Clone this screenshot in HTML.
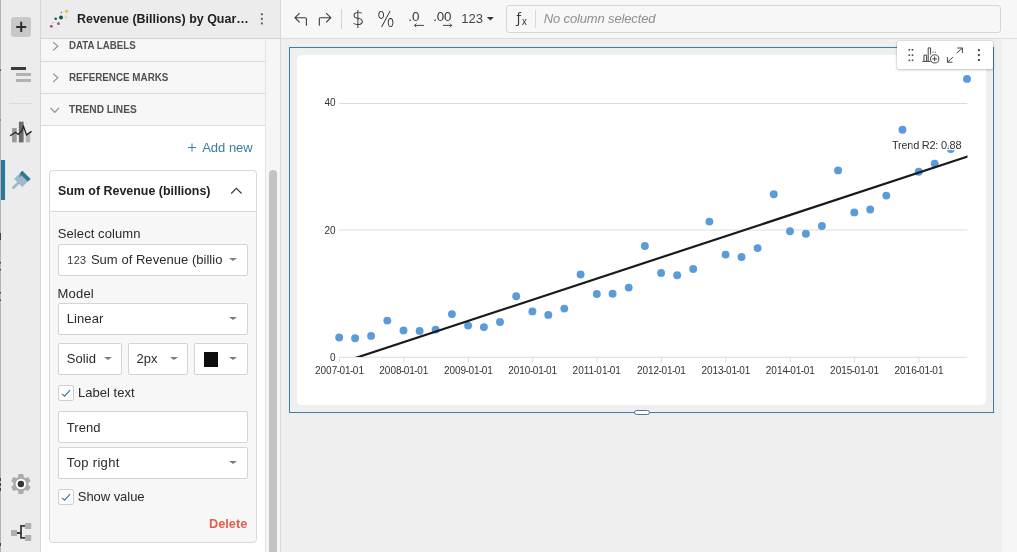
<!DOCTYPE html>
<html lang="en">
<head>
<meta charset="utf-8">
<title>Revenue (Billions) by Quarter</title>
<style>
*{box-sizing:border-box;margin:0;padding:0}
html,body{width:1017px;height:552px;overflow:hidden;background:#efefef;font-family:"Liberation Sans",sans-serif;color:#222}
.abs{position:absolute}
#app{position:relative;width:1017px;height:552px;overflow:hidden;will-change:transform}
/* left rail */
#rail{left:0;top:0;width:41px;height:552px;background:#ececec;border-right:1px solid #d6d6d6}
#edge{left:0;top:0;width:1px;height:552px;background:#b4b4b4}
#plus{left:11px;top:17px;width:20px;height:20px;background:#c8c8c8;border-radius:3px}
#active{left:1px;top:160px;width:4px;height:40px;background:#2d7797;box-shadow:1px 0 0 #c9edf7}
/* side panel */
#panel{left:41px;top:0;width:240px;height:552px;background:#fff;border-right:1px solid #d9d9d9}
#phead{left:0;top:0;width:239px;height:39px;background:#ececec;border-bottom:1px solid #d4d4d4}
.sec{left:0;width:225px;height:32px;background:#f7f7f7;border-bottom:1px solid #dadada;border-right:1px solid #e4e4e4}
#track{left:224px;top:39px;width:15px;height:513px;background:#f6f6f6;border-left:1px solid #e3e3e3}
#thumb{left:228.2px;top:170px;width:7.6px;height:400px;background:#c3c3c3;border-radius:4px}
#card{left:8px;top:170px;width:208px;height:373px;background:#f7f7f7;border:1px solid #d9d9d9;border-radius:4px}
#cardh{left:8px;top:170px;width:208px;height:42px;background:#fff;border:1px solid #d9d9d9;border-radius:4px 4px 0 0}
.inp{position:absolute;background:#fff;border:1px solid #d4d4d4;border-radius:2px;height:32px}
.caret{position:absolute;width:0;height:0;border-left:4.3px solid transparent;border-right:4.3px solid transparent;border-top:3.9px solid #7c7c7c;margin-left:-.6px;margin-top:-1px}
.chk{position:absolute;width:16px;height:16px;background:#fff;border:1px solid #cfcfcf;border-radius:2px}
.t{position:absolute;white-space:nowrap;display:block}
/* top toolbar */
#top{left:281px;top:0;width:736px;height:39px;background:#f7f7f7;border-bottom:1px solid #dcdcdc}
#fx{left:506px;top:5px;width:495px;height:28px;background:#f7f7f7;border:1px solid #d6d6d6;border-radius:3px}
#gutter{left:1002px;top:39px;width:15px;height:513px;background:#f6f6f6}
#sel{left:289px;top:47px;width:705px;height:366px;border:1px solid #4a7c95;box-shadow:0 0 0 1px #dcf3f9}
#ccard{left:297px;top:55px;width:689px;height:350px;background:#fff;border-radius:5px}
#tools{left:896.6px;top:40.6px;width:96.6px;height:28.4px;background:#fff;border-radius:2px;box-shadow:0 0 0 .6px rgba(0,0,0,.1),0 1px 3px rgba(0,0,0,.2)}
#handle{left:634px;top:410px;width:16px;height:5px;background:#fff;border:1px solid #4a7c95;border-radius:3px}
svg.chart,svg.ov{position:absolute;left:0;top:0}
.sym{position:absolute;white-space:nowrap;color:#3c3c3c;line-height:1}
</style>
</head>
<body>
<div id="app">
<div class="abs" id="top"></div>
<div class="abs" id="fx"></div>
<div class="abs" id="gutter"></div>
<div class="abs" id="sel"></div>
<div class="abs" id="ccard"></div>
<svg class="chart" width="1017" height="552" viewBox="0 0 1017 552">
<g stroke="#dcdcdc" stroke-width="1">
<line x1="339.0" x2="967.3" y1="103.5" y2="103.5"/><line x1="339.0" x2="967.3" y1="230" y2="230"/><line x1="339.0" x2="967.3" y1="357.3" y2="357.3"/>
<line x1="339.5" x2="339.5" y1="357.5" y2="362.5"/><line x1="403.8" x2="403.8" y1="357.5" y2="362.5"/><line x1="468.4" x2="468.4" y1="357.5" y2="362.5"/><line x1="532.7" x2="532.7" y1="357.5" y2="362.5"/><line x1="597.1" x2="597.1" y1="357.5" y2="362.5"/><line x1="661.4" x2="661.4" y1="357.5" y2="362.5"/><line x1="725.9" x2="725.9" y1="357.5" y2="362.5"/><line x1="790.3" x2="790.3" y1="357.5" y2="362.5"/><line x1="854.6" x2="854.6" y1="357.5" y2="362.5"/><line x1="919.0" x2="919.0" y1="357.5" y2="362.5"/></g>
<g font-family="Liberation Sans, sans-serif" font-size="10" fill="#333" text-anchor="end"><text x="335.6" y="106">40</text><text x="335.6" y="233.7">20</text><text x="335.6" y="360.6">0</text></g>
<g font-family="Liberation Sans, sans-serif" font-size="10" fill="#333"><text x="315.0" y="373.7">2007<tspan dx="-.55">-</tspan><tspan dx="-.55">01</tspan><tspan dx="-.55">-</tspan><tspan dx="-.55">01</tspan></text><text x="379.3" y="373.7">2008<tspan dx="-.55">-</tspan><tspan dx="-.55">01</tspan><tspan dx="-.55">-</tspan><tspan dx="-.55">01</tspan></text><text x="443.9" y="373.7">2009<tspan dx="-.55">-</tspan><tspan dx="-.55">01</tspan><tspan dx="-.55">-</tspan><tspan dx="-.55">01</tspan></text><text x="508.2" y="373.7">2010<tspan dx="-.55">-</tspan><tspan dx="-.55">01</tspan><tspan dx="-.55">-</tspan><tspan dx="-.55">01</tspan></text><text x="572.6" y="373.7">2011<tspan dx="-.55">-</tspan><tspan dx="-.55">01</tspan><tspan dx="-.55">-</tspan><tspan dx="-.55">01</tspan></text><text x="636.9" y="373.7">2012<tspan dx="-.55">-</tspan><tspan dx="-.55">01</tspan><tspan dx="-.55">-</tspan><tspan dx="-.55">01</tspan></text><text x="701.4" y="373.7">2013<tspan dx="-.55">-</tspan><tspan dx="-.55">01</tspan><tspan dx="-.55">-</tspan><tspan dx="-.55">01</tspan></text><text x="765.8" y="373.7">2014<tspan dx="-.55">-</tspan><tspan dx="-.55">01</tspan><tspan dx="-.55">-</tspan><tspan dx="-.55">01</tspan></text><text x="830.1" y="373.7">2015<tspan dx="-.55">-</tspan><tspan dx="-.55">01</tspan><tspan dx="-.55">-</tspan><tspan dx="-.55">01</tspan></text><text x="894.5" y="373.7">2016<tspan dx="-.55">-</tspan><tspan dx="-.55">01</tspan><tspan dx="-.55">-</tspan><tspan dx="-.55">01</tspan></text></g>
<g fill="#5b9bd9"><circle cx="339.2" cy="337.5" r="3.95"/><circle cx="355.1" cy="338.3" r="3.95"/><circle cx="371.1" cy="335.9" r="3.95"/><circle cx="387.3" cy="320.6" r="3.95"/><circle cx="403.5" cy="330.4" r="3.95"/><circle cx="419.6" cy="330.9" r="3.95"/><circle cx="435.6" cy="329.6" r="3.95"/><circle cx="451.9" cy="314.1" r="3.95"/><circle cx="468.1" cy="325.6" r="3.95"/><circle cx="483.9" cy="327.1" r="3.95"/><circle cx="500.0" cy="322.0" r="3.95"/><circle cx="516.2" cy="296.2" r="3.95"/><circle cx="532.4" cy="311.4" r="3.95"/><circle cx="548.3" cy="314.9" r="3.95"/><circle cx="564.3" cy="308.6" r="3.95"/><circle cx="580.6" cy="274.4" r="3.95"/><circle cx="596.8" cy="294.0" r="3.95"/><circle cx="612.6" cy="293.7" r="3.95"/><circle cx="628.7" cy="287.6" r="3.95"/><circle cx="644.9" cy="246.0" r="3.95"/><circle cx="661.1" cy="273.0" r="3.95"/><circle cx="677.2" cy="275.2" r="3.95"/><circle cx="693.2" cy="269.0" r="3.95"/><circle cx="709.4" cy="221.6" r="3.95"/><circle cx="725.6" cy="254.6" r="3.95"/><circle cx="741.5" cy="257.0" r="3.95"/><circle cx="757.6" cy="248.1" r="3.95"/><circle cx="773.8" cy="194.2" r="3.95"/><circle cx="790.0" cy="231.3" r="3.95"/><circle cx="805.9" cy="233.8" r="3.95"/><circle cx="821.9" cy="226.0" r="3.95"/><circle cx="838.1" cy="170.4" r="3.95"/><circle cx="854.3" cy="212.4" r="3.95"/><circle cx="870.2" cy="209.5" r="3.95"/><circle cx="886.3" cy="195.6" r="3.95"/><circle cx="902.5" cy="129.7" r="3.95"/><circle cx="918.7" cy="171.7" r="3.95"/><circle cx="934.7" cy="163.6" r="3.95"/><circle cx="950.8" cy="149.0" r="3.95"/><circle cx="967.0" cy="78.9" r="3.95"/></g>
<clipPath id="plotclip"><rect x="339.5" y="50" width="628.0" height="307.0"/></clipPath><g clip-path="url(#plotclip)"><line transform="translate(-0.3 0)" x1="347.8" y1="360.6" x2="973.3" y2="154.8" stroke="#1a1a1a" stroke-width="2.2"/></g>
<text x="892" y="149" textLength="69.6" lengthAdjust="spacing" font-family="Liberation Sans, sans-serif" font-size="11" fill="#303030" stroke="#fff" stroke-width="2.4" paint-order="stroke" stroke-linejoin="round">Trend R2: 0.88</text>
</svg>
<div class="abs" id="tools"></div>
<div class="abs" id="handle"></div>

<div class="abs" id="panel">
  <div class="abs sec" style="top:30px"></div>
  <div class="abs sec" style="top:62px"></div>
  <div class="abs sec" style="top:94px"></div>
  <div class="abs" id="card"></div>
  <div class="abs" id="cardh"></div>
  <div class="inp" style="left:17px;top:244px;width:190px"><i class="caret" style="left:171px;top:14px"></i></div>
  <div class="inp" style="left:17px;top:303px;width:190px"><i class="caret" style="left:171px;top:14px"></i></div>
  <div class="inp" style="left:17px;top:343px;width:64px"><i class="caret" style="left:45.5px;top:14px"></i></div>
  <div class="inp" style="left:87px;top:343px;width:60px"><i class="caret" style="left:41.5px;top:14px"></i></div>
  <div class="inp" style="left:153px;top:343px;width:54px"><div class="abs" style="left:9.3px;top:8px;width:14px;height:14.5px;background:#0d0d0d"></div><i class="caret" style="left:35px;top:14px"></i></div>
  <div class="chk" style="left:17px;top:385px"></div>
  <div class="inp" style="left:17px;top:411px;width:190px"></div>
  <div class="inp" style="left:17px;top:447px;width:190px"><i class="caret" style="left:171px;top:14px"></i></div>
  <div class="chk" style="left:17px;top:489px"></div>
  <div class="abs" id="track"></div>
  <div class="abs" id="thumb"></div>
  <div class="abs" id="phead"></div>
</div>
<div class="abs" id="rail">
  <div class="abs" id="edge"></div>
  <div class="abs" id="plus"></div>
  <div class="abs" id="active"></div>
</div>

<!-- toolbar glyph symbols (real text) -->
<span class="sym" id="g_dollar" style="left:351.8px;top:9.4px;font-size:19.8px;font-family:'DejaVu Sans',sans-serif;font-weight:200;color:#1e1e1e">$</span>
<span class="sym" id="g_pct" style="left:376.8px;top:10.3px;font-size:21px;font-family:'DejaVu Sans',sans-serif;font-weight:200;color:#1e1e1e;transform:scaleX(.89);transform-origin:0 0">%</span>
<span class="sym" id="g_d1" style="left:408.2px;top:9.9px;font-size:13.4px;color:#383838">.0</span>
<span class="sym" id="g_d2" style="left:433.2px;top:9.9px;font-size:13.4px;color:#383838;letter-spacing:-.15px">.00</span>
<span class="sym" id="g_f" style="left:516.4px;top:11.3px;font-size:14.5px;font-family:'DejaVu Sans Condensed','DejaVu Sans',sans-serif;color:#3a3a3a">ƒ</span>
<span class="sym" id="g_x" style="left:521.7px;top:17.3px;font-size:10px;font-family:'DejaVu Sans Condensed','DejaVu Sans',sans-serif;color:#3a3a3a">x</span>

<span class="t" id="t_title" style="left:76.60px;top:10.80px;height:15.2px;line-height:15.2px;font-size:13.2px;transform:scaleX(0.9448);transform-origin:0 0;font-weight:bold;color:#222">Revenue (Billions) by Quar…</span>
<span class="t" id="t_s1" style="left:68.80px;top:38.60px;height:13.4px;line-height:13.4px;font-size:11.4px;transform:scaleX(0.8511);transform-origin:0 0;font-weight:bold;color:#505050">DATA LABELS</span>
<span class="t" id="t_s2" style="left:68.80px;top:70.50px;height:13.4px;line-height:13.4px;font-size:11.4px;transform:scaleX(0.8629);transform-origin:0 0;font-weight:bold;color:#505050">REFERENCE MARKS</span>
<span class="t" id="t_s3" style="left:68.80px;top:102.50px;height:13.4px;line-height:13.4px;font-size:11.4px;transform:scaleX(0.8913);transform-origin:0 0;font-weight:bold;color:#505050">TREND LINES</span>
<span class="t" id="t_add" style="left:202.20px;top:140.10px;height:15px;line-height:15px;font-size:13px;letter-spacing:-0.013px;color:#3a7d9b">Add new</span>
<span class="t" id="t_sum" style="left:57.80px;top:183.10px;height:15px;line-height:15px;font-size:13px;transform:scaleX(0.9554);transform-origin:0 0;font-weight:bold;color:#222">Sum of Revenue (billions)</span>
<span class="t" id="t_selc" style="left:57.80px;top:225.80px;height:15px;line-height:15px;font-size:13px;letter-spacing:0.080px;color:#2a2a2a">Select column</span>
<span class="t" id="t_123a" style="left:67.30px;top:253.50px;height:12.8px;line-height:12.8px;font-size:10.8px;letter-spacing:0.328px;color:#3a3a3a">123</span>
<span class="t" id="t_sumb" style="left:90.90px;top:252.10px;height:15px;line-height:15px;font-size:13px;letter-spacing:0.037px;color:#2a2a2a">Sum of Revenue (billio</span>
<span class="t" id="t_model" style="left:57.60px;top:285.70px;height:15px;line-height:15px;font-size:13px;letter-spacing:0.176px;color:#2a2a2a">Model</span>
<span class="t" id="t_linear" style="left:66.70px;top:311.30px;height:15px;line-height:15px;font-size:13px;letter-spacing:0.093px;color:#2a2a2a">Linear</span>
<span class="t" id="t_solid" style="left:66.70px;top:351.30px;height:15px;line-height:15px;font-size:13px;letter-spacing:0.116px;color:#2a2a2a">Solid</span>
<span class="t" id="t_2px" style="left:136.50px;top:351.30px;height:15px;line-height:15px;font-size:13px;letter-spacing:-0.023px;color:#2a2a2a">2px</span>
<span class="t" id="t_label" style="left:77.90px;top:385.10px;height:15px;line-height:15px;font-size:13px;letter-spacing:0.032px;color:#2a2a2a">Label text</span>
<span class="t" id="t_trend" style="left:66.80px;top:419.80px;height:15px;line-height:15px;font-size:13px;letter-spacing:0.043px;color:#2a2a2a">Trend</span>
<span class="t" id="t_topr" style="left:66.80px;top:455.30px;height:15px;line-height:15px;font-size:13px;letter-spacing:0.336px;color:#2a2a2a">Top right</span>
<span class="t" id="t_showv" style="left:77.80px;top:489.10px;height:15px;line-height:15px;font-size:13px;letter-spacing:-0.052px;color:#2a2a2a">Show value</span>
<span class="t" id="t_del" style="left:209.40px;top:515.90px;height:15px;line-height:15px;font-size:13px;transform:scaleX(0.9813);transform-origin:0 0;font-weight:bold;color:#e0604f">Delete</span>
<span class="t" id="t_123b" style="left:461.20px;top:11.00px;height:15px;line-height:15px;font-size:13px;letter-spacing:0.099px;color:#444">123</span>
<span class="t" id="t_nocol" style="left:543.80px;top:11.10px;height:15px;line-height:15px;font-size:13px;letter-spacing:-0.148px;font-style:italic;color:#8e8e8e">No column selected</span>


<!-- icon overlay -->
<svg class="ov" width="1017" height="552" viewBox="0 0 1017 552" fill="none">
  <!-- rail: plus -->
  <path d="M16.2 27H26.2M21.2 21.8V32" stroke="#2e2e2e" stroke-width="2"/>
  <!-- rail: list icon -->
  <rect x="11" y="67" width="15" height="3" fill="#3a3a3a"/>
  <rect x="16" y="73" width="15" height="3" fill="#b2b2b2"/>
  <rect x="16" y="79" width="15" height="3" fill="#b2b2b2"/>
  <rect x="9" y="103" width="23" height="1" fill="#d9d9d9"/>
  <!-- rail: chart icon -->
  <rect x="12.1" y="128.1" width="4.6" height="14.3" fill="#9b9b9b"/>
  <rect x="18.9" y="121.7" width="4.7" height="20.7" fill="#6a6a6a"/>
  <rect x="25.7" y="134" width="4.5" height="8.4" fill="#b6b6b6"/>
  <path d="M10.2 135.7L15.5 132.2L18.3 134.4L21.6 131.2L23.5 126.3L26.5 134.9L31.6 131.4" stroke="#222" stroke-width="1.3" stroke-linejoin="miter"/>
  <!-- rail: brush -->
  <g transform="translate(22.3 178.9) rotate(45)">
    <rect x="-1.4" y="4" width="2.8" height="10" rx="1.4" fill="#9fb9ca"/>
    <rect x="-5.8" y="-5.8" width="11.6" height="11.6" fill="#9fb9ca"/>
    <rect x="-5.8" y="-5.8" width="11.6" height="3.8" fill="#2d7797"/>
    <path d="M-3.6 -2.6V0.4" stroke="#2d7797" stroke-width="1"/>
  </g>
  <!-- rail: gear -->
  <g transform="translate(20.9 484)">
    <circle r="7.6" fill="#ababab"/>
    <g fill="#ababab">
      <rect x="-2.7" y="-10" width="5.4" height="20" rx="1.3"/>
      <rect x="-2.7" y="-10" width="5.4" height="20" rx="1.3" transform="rotate(60)"/>
      <rect x="-2.7" y="-10" width="5.4" height="20" rx="1.3" transform="rotate(120)"/>
    </g>
    <circle r="5.2" fill="#fff"/>
    <circle r="3.2" fill="#333"/>
  </g>
  <!-- rail: tree -->
  <rect x="11" y="530" width="6" height="6" fill="#b0b0b0"/>
  <rect x="25" y="523" width="6.2" height="6" fill="#b0b0b0"/>
  <rect x="25" y="535" width="6.2" height="6" fill="#b0b0b0"/>
  <path d="M17 533H21M25 525.9H21V537.9H25" stroke="#3a3a3a" stroke-width="1.8"/>
  <!-- rail: clipped marks at x=0 -->
  <g fill="#444"><rect x="0" y="69.5" width="1" height="1.5"/><rect x="0" y="233" width="1" height="7"/><rect x="0" y="262" width="1" height="1.5"/><rect x="0" y="269" width="1" height="1.5"/><rect x="0" y="292" width="1" height="1.5"/><rect x="0" y="299.5" width="1" height="1.5"/><rect x="0" y="478" width="1" height="3"/><rect x="0" y="483" width="1" height="3"/><rect x="0" y="488" width="1" height="3"/><rect x="0" y="543" width="1" height="3"/></g>
  <rect x="0" y="119" width="1" height="2" fill="#c07a55"/>
  <!-- panel header: scatter icon -->
  <circle cx="66.5" cy="11.2" r="1.5" fill="#e6bd3c"/>
  <circle cx="61.5" cy="12.5" r=".75" fill="#a3458d"/>
  <circle cx="61" cy="17.6" r="2" fill="#0d5a48"/>
  <circle cx="55.7" cy="18.7" r="1.3" fill="#0d5a48"/>
  <circle cx="65.7" cy="17.3" r=".75" fill="#e6bd3c"/>
  <circle cx="58.4" cy="23.7" r="1.35" fill="#a3458d"/>
  <circle cx="53.2" cy="22.7" r=".75" fill="#e6bd3c"/>
  <circle cx="51.3" cy="26.3" r="1.4" fill="#a3458d"/>
  <!-- panel header: kebab -->
  <g fill="#555"><rect x="260.9" y="13.3" width="1.9" height="1.9"/><rect x="260.9" y="17.9" width="1.9" height="1.9"/><rect x="260.9" y="22.5" width="1.9" height="1.9"/></g>
  <!-- section chevrons -->
  <g stroke="#8a8a8a" stroke-width="1.1">
    <path d="M53.2 42.1L57.8 46.2L53.2 50.3"/>
    <path d="M53.2 73.7L57.8 77.8L53.2 81.9"/>
    <path d="M50.6 107.9L54.8 112.4L59 107.9"/>
  </g>
  <!-- add new plus -->
  <path d="M188 147.5H196M192 143.5V151.5" stroke="#3a7d9b" stroke-width="1"/>
  <!-- card chevron up -->
  <path d="M231.2 193.5L236.4 188.3L241.6 193.5" stroke="#3a3a3a" stroke-width="1.15"/>
  <!-- checkmarks -->
  <path d="M62 393.9L64.6 396.2L70.2 390.1" stroke="#2d7a9c" stroke-width="1.1"/>
  <path d="M62 497.9L64.6 500.2L70.2 494.1" stroke="#2d7a9c" stroke-width="1.1"/>
  <!-- toolbar: undo / redo -->
  <g stroke="#3a3a3a" stroke-width="1.1">
    <path d="M299.6 13.1L295 17.7L299.6 22.4M295 17.7H305.3Q306.4 17.7 306.4 18.8V25.7"/>
    <path d="M326.2 13.1L330.8 17.7L326.2 22.4M330.8 17.7H320.4Q319.3 17.7 319.3 18.8V25.7"/>
  </g><g stroke="#3a3a3a" stroke-width=".95">
    <path d="M424 25.4H414.5M416.3 23.6L414.5 25.4L416.3 27.2"/>
    <path d="M443 25.4H451.7M449.9 23.6L451.7 25.4L449.9 27.2"/>
  </g>
  <rect x="341" y="9" width="1" height="20" fill="#d2d2d2"/>
  <path d="M486.9 17.1H493.9L490.4 20.6Z" fill="#333"/>
  <rect x="535" y="10" width="1" height="18" fill="#d9d9d9"/>
  <!-- tools popup icons -->
  <g fill="#444">
    <rect x="908.5" y="49" width="1.6" height="1.6"/><rect x="911.7" y="49" width="1.6" height="1.6"/>
    <rect x="908.5" y="54.3" width="1.6" height="1.6"/><rect x="911.7" y="54.3" width="1.6" height="1.6"/>
    <rect x="908.5" y="59.5" width="1.6" height="1.6"/><rect x="911.7" y="59.5" width="1.6" height="1.6"/>
    <rect x="977.9" y="49.1" width="2" height="2"/><rect x="977.9" y="54.1" width="2" height="2"/><rect x="977.9" y="59" width="2" height="2"/>
  </g>
  <g stroke="#444" stroke-width="1">
    <path d="M922.4 61.4H930.5M924 61.4V55.1H926.6V61.4M928.2 61.4V47.9H930.6V54.5"/>
    <circle cx="934.7" cy="58.9" r="4.1" fill="#fff"/>
    <path d="M932.3 58.9H937.1M934.7 56.5V61.3"/>
    <path d="M932.5 52.2H933.5M934.8 52.2H935.8" stroke-width="1"/>
    <path d="M947.4 62.2L953.1 57.1M947.4 57.2V62.2H952.4M956.7 53L962.4 48M957.3 48H962.4V53.2"/>
  </g>
</svg>
</div>
</body>
</html>
